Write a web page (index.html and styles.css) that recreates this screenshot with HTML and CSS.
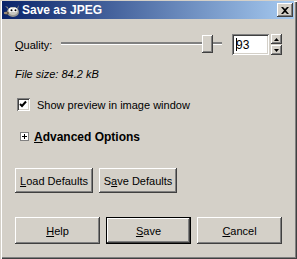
FILE: index.html
```html
<!DOCTYPE html>
<html lang="en">
<head>
  <meta charset="UTF-8">
  <title>Save as JPEG</title>
  <link rel="stylesheet" href="styles.css">
</head>
<body>
  <div class="window">
    <div class="titlebar">
      <svg class="app-icon" width="17" height="15" viewBox="0 0 17 15">
        <ellipse cx="10" cy="9" rx="6" ry="5" fill="#9a9a94"/>
        <ellipse cx="10" cy="8" rx="5" ry="4" fill="#c8c8c0"/>
        <path d="M5 6 L2 3 L5 4 Z" fill="#8a8a84"/>
        <path d="M14 5 L16 2 L15 6 Z" fill="#8a8a84"/>
        <circle cx="8" cy="7" r="2.2" fill="#fff"/>
        <circle cx="12" cy="7" r="2.2" fill="#fff"/>
        <circle cx="8.5" cy="7.3" r="1" fill="#000"/>
        <circle cx="12.5" cy="7.3" r="1" fill="#000"/>
        <ellipse cx="3.5" cy="10" rx="2.5" ry="1.5" fill="#6b5a48"/>
        <rect x="1" y="9.5" width="3" height="1" fill="#d0c0a0"/>
      </svg>
      <span class="title">Save as JPEG</span>
      <span class="close-btn">
        <svg width="8" height="7" viewBox="0 0 8 7">
          <path d="M0 0 L2 0 L4 2 L6 0 L8 0 L5 3.5 L8 7 L6 7 L4 5 L2 7 L0 7 L3 3.5 Z" fill="#000"/>
        </svg>
      </span>
    </div>

    <div class="content">
      <div class="quality-row">
        <label class="quality-label"><u>Q</u>uality:</label>
        <div class="slider">
          <div class="track"></div>
          <div class="thumb"></div>
        </div>
        <div class="spin">
          <div class="entry"><span class="caret"></span>93</div>
          <div class="arrows">
            <span class="arrow"><svg width="5" height="3" viewBox="0 0 5 3"><path d="M2.5 0 L5 3 L0 3 Z" fill="#000"/></svg></span>
            <span class="arrow"><svg width="5" height="3" viewBox="0 0 5 3"><path d="M0 0 L5 0 L2.5 3 Z" fill="#000"/></svg></span>
          </div>
        </div>
      </div>

      <div class="file-size">File size: 84.2 kB</div>

      <div class="check-row">
        <span class="checkbox">
          <svg width="9" height="9" viewBox="0 0 9 9">
            <path d="M1 4 L3 6 L7 1.5" stroke="#000" stroke-width="2" fill="none"/>
          </svg>
        </span>
        <span>Show preview in image window</span>
      </div>

      <div class="expander-row">
        <span class="expander">
          <svg width="7" height="7" viewBox="0 0 7 7">
            <rect x="1" y="3" width="5" height="1" fill="#000"/>
            <rect x="3" y="1" width="1" height="5" fill="#000"/>
          </svg>
        </span>
        <span class="expander-label"><u>A</u>dvanced Options</span>
      </div>

      <div class="defaults-row">
        <button class="btn small"><u>L</u>oad Defaults</button>
        <button class="btn small">S<u>a</u>ve Defaults</button>
      </div>

      <div class="action-row">
        <button class="btn wide"><u>H</u>elp</button>
        <button class="btn wide default"><u>S</u>ave</button>
        <button class="btn wide"><u>C</u>ancel</button>
      </div>
    </div>
  </div>
</body>
</html>
```

FILE: styles.css
```css
body {
  margin: 0;
  background: #d4d0c8;
  font-family: "Liberation Sans", Arial, sans-serif;
  font-size: 11px;
  color: #000;
}

.window {
  width: 297px;
  height: 259px;
  box-sizing: border-box;
  padding: 1px 3px 3px 2px;
  background: #d4d0c8;
  box-shadow: inset 1px 1px #d4d0c8, inset 2px 2px #fff,
              inset -1px -1px #404040, inset -2px -2px #808080;
}

/* Title bar */
.titlebar {
  height: 18px;
  display: flex;
  align-items: center;
  background: linear-gradient(to right, #0a246a, #a6caf0);
}

.app-icon {
  margin-left: 1px;
  margin-right: 2px;
}

.title {
  flex: 1;
  color: #fff;
  font-weight: bold;
  font-size: 12px;
}

.close-btn {
  width: 16px;
  height: 14px;
  margin-right: 1px;
  box-sizing: border-box;
  display: flex;
  align-items: center;
  justify-content: center;
  background: #d4d0c8;
  box-shadow: inset -1px -1px #404040, inset 1px 1px #fff, inset -2px -2px #808080;
}

/* Content */
.content {
  padding-left: 13px;
  display: flex;
  flex-direction: column;
}

.quality-row {
  margin-top: 15px;
  height: 21px;
  display: flex;
  align-items: center;
}

.quality-label {
  width: 46px;
}

.slider {
  position: relative;
  width: 161px;
  height: 21px;
  display: flex;
  align-items: center;
}

.track {
  width: 100%;
  height: 1px;
  background: #808080;
  border-top: 1px solid #808080;
  border-bottom: 1px solid #fff;
  margin-top: -2px;
}

.thumb {
  position: absolute;
  left: 141px;
  top: 1px;
  width: 11px;
  height: 18px;
  box-sizing: border-box;
  background: #d4d0c8;
  box-shadow: inset -1px -1px #404040, inset 1px 1px #fff, inset -2px -2px #808080;
}

.spin {
  margin-left: 10px;
  display: flex;
  gap: 2px;
}

.entry {
  width: 37px;
  height: 21px;
  box-sizing: border-box;
  padding-left: 4px;
  display: flex;
  align-items: center;
  background: #fff;
  font-size: 12px;
  box-shadow: inset 1px 1px #808080, inset -1px -1px #fff,
              inset 2px 2px #404040, inset -2px -2px #d4d0c8;
}

.caret {
  width: 1px;
  height: 13px;
  background: #000;
  margin-right: -1px;
}

.arrows {
  display: flex;
  flex-direction: column;
  gap: 1px;
}

.arrow {
  width: 11px;
  height: 10px;
  box-sizing: border-box;
  display: flex;
  align-items: center;
  justify-content: center;
  background: #d4d0c8;
  box-shadow: inset -1px -1px #404040, inset 1px 1px #fff, inset -2px -2px #808080;
}

.file-size {
  margin-top: 13px;
  line-height: 13px;
  font-style: italic;
}

.check-row {
  margin-top: 17px;
  height: 13px;
  display: flex;
  align-items: center;
  gap: 7px;
}

.checkbox {
  margin-left: 2px;
  width: 13px;
  height: 13px;
  box-sizing: border-box;
  display: flex;
  align-items: center;
  justify-content: center;
  background: #fff;
  box-shadow: inset 1px 1px #808080, inset -1px -1px #fff,
              inset 2px 2px #404040, inset -2px -2px #d4d0c8;
}

.expander-row {
  margin-top: 19px;
  height: 13px;
  display: flex;
  align-items: center;
  gap: 5px;
}

.expander {
  margin-left: 5px;
  width: 9px;
  height: 9px;
  box-sizing: border-box;
  border: 1px solid #808080;
  background: #fff;
  display: flex;
}

.expander-label {
  font-weight: bold;
  font-size: 12px;
}

.defaults-row {
  margin-top: 25px;
  display: flex;
  gap: 6px;
}

.action-row {
  margin-top: 24px;
  display: flex;
  gap: 6px;
}

.btn {
  font-family: inherit;
  font-size: 11px;
  color: #000;
  background: #d4d0c8;
  border: none;
  padding: 0;
  box-sizing: border-box;
  box-shadow: inset -1px -1px #404040, inset 1px 1px #fff, inset -2px -2px #808080;
}

.btn.small {
  width: 78px;
  height: 25px;
}

.btn.wide {
  width: 85px;
  height: 27px;
}

.btn.default {
  border: 1px solid #000;
}
```
